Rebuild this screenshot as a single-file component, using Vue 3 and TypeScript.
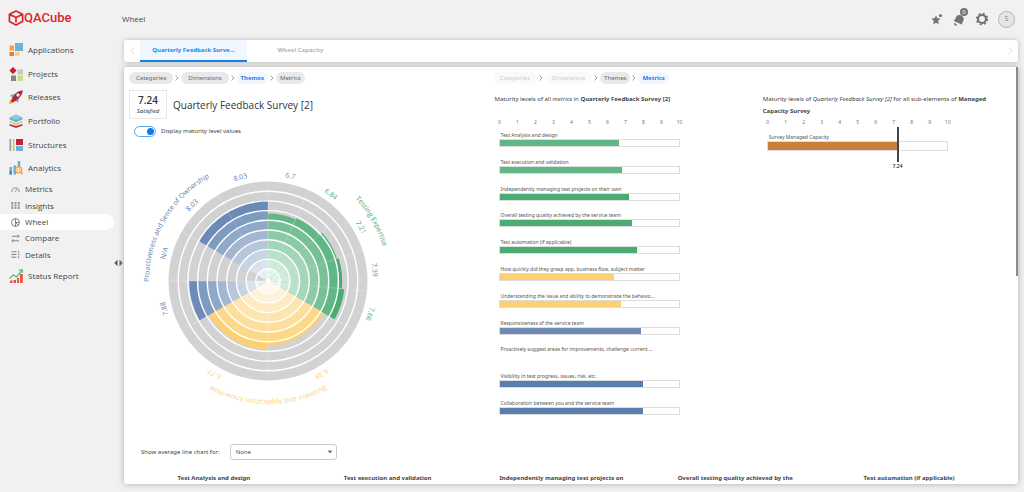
<script setup lang="ts">
import { computed, ref } from 'vue'

type Rgb = [number, number, number]
interface Sector { name: string; label: string; value: number | null }
interface Category { id: string; name: string; color: Rgb; full: number; radius: number; sectors: Sector[] }

const categories: Category[] = [
  {
    id: 'testing', name: 'Testing Expertise', color: [73, 172, 114], full: 8, radius: 120,
    sectors: [
      { name: 'Test Analysis and design', label: '6.7', value: 6.7 },
      { name: 'Test execution and validation', label: '6.84', value: 6.84 },
      { name: 'Independently managing test projects on their own', label: '7.21', value: 7.21 },
      { name: 'Overall testing quality achieved by the service team', label: '7.39', value: 7.39 },
      { name: 'Test automation (if applicable)', label: '7.66', value: 7.66 },
    ],
  },
  {
    id: 'business', name: 'Business and Application Know-How', color: [252, 209, 117], full: 7, radius: 119,
    sectors: [
      { name: 'How quickly did they grasp app, business flow, subject matter', label: '6.38', value: 6.38 },
      { name: 'Understanding the issue and ability to demonstrate the behavio...', label: '6.77', value: 6.77 },
    ],
  },
  {
    id: 'ownership', name: 'Proactiveness and Sense of Ownership', color: [90, 126, 174], full: 9, radius: 119,
    sectors: [
      { name: 'Responsiveness of the service team', label: '7.88', value: 7.88 },
      { name: 'Proactively suggest areas for improvements, challenge current ...', label: 'N/A', value: null },
      { name: 'Visibility in test progress, issues, risk, etc.', label: '8.03', value: 8.03 },
      { name: 'Collaboration between you and the service team', label: '8.03', value: 8.03 },
    ],
  },
]

const shade = (c: Category, level: number): string => {
  const a = Math.min(1, level / c.full)
  return `rgb(${c.color.map((v) => Math.round(255 - (255 - v) * a)).join(',')})`
}

const CORE = 2.5
const STEP = 9.7
const radiusOf = (value: number): number => CORE + STEP * value

const point = (r: number, deg: number): string => {
  const t = (deg * Math.PI) / 180
  return `${(r * Math.sin(t)).toFixed(2)} ${(-r * Math.cos(t)).toFixed(2)}`
}
const wedge = (r: number, from: number, to: number): string =>
  `M0 0L${point(r, from)}A${r} ${r} 0 0 1 ${point(r, to)}Z`
const arc = (r: number, from: number, to: number): string =>
  `M${point(r, from)}A${r} ${r} 0 0 1 ${point(r, to)}`

const slices = computed(() => {
  let angle = 0
  return categories.flatMap((c) => {
    const span = 120 / c.sectors.length
    return c.sectors.map((s) => {
      const from = angle
      angle += span
      const layers: { d: string; fill: string }[] = []
      if (s.value !== null) {
        for (let level = Math.ceil(s.value); level >= 1; level--) {
          layers.push({ d: wedge(radiusOf(Math.min(level, s.value)), from, from + span), fill: shade(c, level) })
        }
      }
      return { ...s, from, mid: from + span / 2, layers, ink: shade(c, c.full) }
    })
  })
})

const bars = categories.flatMap((c) =>
  c.sectors.map((s) => ({ ...s, fill: s.value === null ? '' : shade(c, Math.ceil(s.value)) })),
)
const ticks = Array.from({ length: 11 }, (_, i) => i)
const showValues = ref(true)
const average = ref('None')

const mainNav = ['Applications', 'Projects', 'Releases', 'Portfolio', 'Structures', 'Analytics']
const subNav = ['Metrics', 'Insights', 'Wheel', 'Compare', 'Details']
const crumbs = ['Categories', 'Dimensions', 'Themes', 'Metrics']
const columns = [
  'Test Analysis and design',
  'Test execution and validation',
  'Independently managing test projects on',
  'Overall testing quality achieved by the',
  'Test automation (if applicable)',
]
</script>

<template>
  <div class="app">
    <aside class="sidebar">
      <a href="#" class="logo" aria-label="QACube">
        <svg viewBox="0 0 16 16" width="16" height="16" fill="none" stroke="#e01f2d" stroke-width="1.7" stroke-linejoin="round">
          <path d="M8 1L14.600 4.200V11.600L8 15L1.400 11.600V4.200ZM4.200 5.600L8 7.600L14.200 4.400M8 7.600V12.500M1.600 4.400L4.600 6" />
        </svg>
        <span>QACube</span>
      </a>
      <nav>
        <div class="group">
          <a v-for="item in mainNav" :key="item" href="#" class="item">
            <svg v-if="item === 'Applications'" viewBox="0 0 14 14" width="14" height="14">
              <path fill="#f9a13c" d="M.5 2.500h4.500v5H.5z" /><path fill="#6db3d3" d="M6 0h8v8H6z" />
              <path fill="#f0782c" d="M.5 9h4.500v4H.5z" /><path fill="#fbd08c" d="M6 9h4.500v4H6z" />
            </svg>
            <svg v-else-if="item === 'Projects'" viewBox="0 0 14 14" width="14" height="14">
              <path fill="#c81e3c" d="M4 0l3.600 3.600L4 7.200L.4 3.600z" /><path fill="#c8c8c8" d="M8.500 2.500H14V7.500H8.500z" />
              <path fill="#858585" d="M2 8.500h5V14H2z" /><path fill="#c5df7c" d="M8.500 8.500H14V14H8.500z" />
            </svg>
            <svg v-else-if="item === 'Releases'" viewBox="0 0 14 14" width="14" height="14">
              <path fill="#74b5d4" d="M1 5l4-1 5 5-1 4-2-2-4-3zM2 9l3 3-3 0z" />
              <path fill="#f5a23c" d="M0 14l1-4 3-1 1 2-1 2z" />
              <path fill="#b92135" d="M3 9C5 4 8 1 13.800.2C13.500 5 10 9 5.500 11.400z" />
              <path fill="#6b2640" d="M3 9l-.8 2L4 12.200 5.500 11.400z" /><circle cx="9" cy="5" r="1.700" fill="#d9eef6" />
            </svg>
            <svg v-else-if="item === 'Portfolio'" viewBox="0 0 14 14" width="14" height="14">
              <path fill="#c9203d" d="M.5 10L7 12l6.500-2v1.500L7 14 .5 11.500z" />
              <path fill="#b8d66b" d="M.5 7L7 9.200 13.500 7v1.500L7 11.200 .5 8.500z" />
              <path fill="#69b1cf" d="M7 .8l6.500 2.600v2.200L7 8.200 .5 5.600V3.400z" /><path fill="#8ec9df" d="M7 .8l6.500 2.600L7 6 .5 3.400z" />
            </svg>
            <svg v-else-if="item === 'Structures'" viewBox="0 0 14 14" width="14" height="14">
              <path fill="#9c9c9c" d="M.5 1H2v12H.5z" /><path fill="#e5e5e5" d="M2 1h2v12H2z" /><path fill="#b7d56c" d="M4 1h1.500v12H4z" />
              <path fill="#c5203c" d="M7 1h7v6H7z" /><path fill="#6db4d3" d="M7 8h7v5H7z" />
            </svg>
            <svg v-else viewBox="0 0 14 14" width="14" height="14">
              <path fill="#67aecd" d="M.5 6H3v7.500H.5zM4.500 4.500H7v9H4.500zM8.700 0h2.500v6H8.700z" /><path fill="#4593b9" d="M.5 10H3v3.500H.5z" />
              <circle cx="9.600" cy="8.800" r="3" fill="#fff1dc" stroke="#f49b3a" stroke-width="1.300" />
              <path stroke="#f49b3a" stroke-width="1.500" d="M11.700 11l2 2.300" /><path stroke="#f49b3a" stroke-width=".8" d="M8.500 10V8.500M10.500 10V7.500" />
            </svg>
            {{ item }}
          </a>
        </div>
        <div class="group sub">
          <a v-for="item in subNav" :key="item" href="#" class="subitem" :class="{ active: item === 'Wheel' }">
            <svg viewBox="0 0 10 10" width="9" height="9" fill="none" stroke="#777" stroke-width="1">
              <path v-if="item === 'Metrics'" d="M1.200 8A4 3.700 0 1 1 8.800 8M4.800 7.500L6.500 5" />
              <path v-else-if="item === 'Insights'" stroke="#999" stroke-width="2.200" stroke-dasharray="2.200 .6" d="M1.400 1v8M5 1v8M8.600 1v8" />
              <path v-else-if="item === 'Wheel'" d="M5 .6A4.400 4.400 0 1 0 5 9.400A4.400 4.400 0 1 0 5 .6ZM5 .6V9.400M5 5h4.400M5 5l3 3" />
              <path v-else-if="item === 'Compare'" d="M1 2.500h8M7.300.8L9 2.500 7.300 4.200M9 7.500H1M2.700 5.800L1 7.500l1.700 1.700" />
              <path v-else d="M.5 2h5.500M.5 5h5.500M.5 8h5.500M8.500 1v2M8.500 4v2M8.500 7v2" />
            </svg>
            {{ item }}
          </a>
        </div>
        <a href="#" class="item">
          <svg viewBox="0 0 14 14" width="14" height="14">
            <path fill="#ef5142" d="M1 11.500h2.500V14H1zM4.500 11H7v3H4.500zM8 9h2v5H8zM11 5h2.800v9H11z" />
            <path fill="none" stroke="#57c785" stroke-width="1.400" d="M.5 9.500L4.500 6l3 2L13 1.500M10 1h3.500v3" />
          </svg>
          Status Report
        </a>
      </nav>
      <button class="resize" aria-label="Resize sidebar">
        <svg viewBox="0 0 9 8" width="9" height="8" fill="#555"><path d="M3.500 .8v6.400L.3 4zM5.500.8v6.400L8.700 4z" /></svg>
      </button>
    </aside>

    <main class="main">
      <header class="topbar">
        <span class="page">Wheel</span>
        <div class="actions">
          <button aria-label="Favourites">
            <svg viewBox="0 0 12 12" width="12" height="12" fill="#737373">
              <path d="M5 2.500l1.300 2.800 3.200.3-2.300 2.200.6 3.400L5 9.700 2.200 11.200l.6-3.400L.4 5.600l3.200-.3z" /><path d="M9.500.5l.7 1.300 1.400.3-1 1 .2 1.400-1.300-.7-1.300.7.200-1.400-1-1 1.400-.3z" />
            </svg>
          </button>
          <button class="bell" aria-label="Notifications">
            <svg viewBox="0 0 14 14" width="14" height="14" fill="#737373">
              <path d="M1.200 8.800C4.200 8 3 4.500 6 3.200c3.200-1.300 6.500 1.800 5.500 5-.8 2.600-1.800 2.300-1.300 4.600z" /><path d="M2.500 10.700l2.800 2.200a1.700 1.700 0 0 1-2.800-2.200z" />
            </svg>
            <span class="badge">0</span>
          </button>
          <button aria-label="Settings">
            <svg viewBox="-7 -7 14 14" width="14" height="14" fill="none" stroke="#737373">
              <circle r="4" stroke-width="2.200" /><circle r="5.400" stroke-width="1.600" stroke-dasharray="2.100 2.140" />
            </svg>
          </button>
          <button class="avatar" aria-label="Account">S</button>
        </div>
      </header>

      <div class="tabs">
        <button class="arrow" aria-label="Previous"><svg viewBox="0 0 5 8" width="5" height="8"><path d="M4.500.5L1 4l3.500 3.500" /></svg></button>
        <button class="tab on">Quarterly Feedback Surve...</button>
        <button class="tab">Wheel Capacity</button>
        <button class="arrow last" aria-label="Next"><svg viewBox="0 0 5 8" width="5" height="8"><path d="M.5.5L4 4 .5 7.500" /></svg></button>
      </div>

      <section class="panel">
        <div class="thumb"></div>
        <div class="grid">
          <div class="overview">
            <div class="crumbs">
              <template v-for="(c, i) in crumbs" :key="c">
                <svg v-if="i" viewBox="0 0 4 6" width="4" height="6"><path d="M.5.5L3 3 .5 5.500" /></svg>
                <button :class="{ current: c === 'Themes' }">{{ c }}</button>
              </template>
            </div>
            <div class="heading">
              <div class="score"><b>7.24</b><i>Satisfied</i></div>
              <h1>Quarterly Feedback Survey [2]</h1>
            </div>
            <label class="toggle">
              <input v-model="showValues" type="checkbox" />
              Display maturity level values
            </label>
            <svg class="wheel" viewBox="-139 -139 278 278" role="img" aria-label="Maturity wheel">
              <circle r="99.500" fill="#d2d2d2" />
              <g v-for="s in slices" :key="s.from">
                <path v-for="(l, i) in s.layers" :key="i" :d="l.d" :fill="l.fill" />
              </g>
              <g fill="none" stroke="#fff" stroke-width="1.400">
                <circle v-for="n in 9" :key="n" :r="radiusOf(n)" />
              </g>
              <path v-for="s in slices" :key="s.from" :d="`M0 0L${point(99.5, s.from)}`" stroke="#fff" stroke-width=".8" opacity=".3" />
              <circle r="2.500" fill="#fff" />
              <g v-if="showValues" class="values">
                <text v-for="s in slices" :key="s.from" y="-105" :transform="`rotate(${s.mid})`" :fill="s.ink">{{ s.label }}</text>
              </g>
              <g class="names">
                <template v-for="(c, i) in categories" :key="c.id">
                  <path :id="c.id" :d="arc(c.radius, i * 120, i * 120 + 120)" fill="none" />
                  <text :fill="shade(c, c.full)"><textPath :href="`#${c.id}`" startOffset="50%">{{ c.name }}</textPath></text>
                </template>
              </g>
            </svg>
            <div class="average">
              <label for="average">Show average line chart for:</label>
              <span class="select">
                <select id="average" v-model="average"><option>None</option></select>
                <svg viewBox="0 0 6 4" width="6" height="4"><path fill="#777" d="M.5.500h5L3 3.500z" /></svg>
              </span>
            </div>
          </div>

          <div class="metrics">
            <div class="crumbs">
              <template v-for="(c, i) in crumbs" :key="c">
                <svg v-if="i" viewBox="0 0 4 6" width="4" height="6"><path d="M.5.5L3 3 .5 5.500" /></svg>
                <button :class="{ current: c === 'Metrics' }" :disabled="i < 2">{{ c }}</button>
              </template>
            </div>
            <p class="caption">Maturity levels of all <i>metrics</i> in <b>Quarterly Feedback Survey [2]</b></p>
            <div class="axis"><span v-for="t in ticks" :key="t">{{ t }}</span></div>
            <div class="bars">
              <div v-for="b in bars" :key="b.name" class="bar">
                <span>{{ b.name }}</span>
                <div v-if="b.value !== null" class="track">
                  <div class="fill" :style="{ width: b.value * 10 + '%', background: b.fill }"></div>
                </div>
              </div>
            </div>
          </div>

          <div class="elements">
            <p class="caption">Maturity levels of <i>Quarterly Feedback Survey [2]</i> for all sub-elements of <b>Managed Capacity Survey</b></p>
            <div class="axis"><span v-for="t in ticks" :key="t">{{ t }}</span></div>
            <div class="bar wide">
              <span>Survey Managed Capacity</span>
              <div class="track">
                <div class="fill" :style="{ width: '72.4%', background: '#cc7f3c' }"></div>
                <div class="marker" :style="{ left: '72%' }"><span>7.24</span></div>
              </div>
            </div>
          </div>
        </div>
        <div class="columns"><h2 v-for="c in columns" :key="c">{{ c }}</h2></div>
      </section>
    </main>
  </div>
</template>

<style>
body { margin: 0; background: #f1f1f1; }
</style>

<style scoped>
* { box-sizing: border-box; }
.app { display: flex; height: 100vh; overflow: hidden; font: 6px/12px "Noto Sans", "Open Sans", sans-serif; color: #444; background: #f1f1f1; }
button { margin: 0; padding: 0; border: 0; background: none; font: inherit; color: inherit; cursor: pointer; }
a { color: inherit; text-decoration: none; }
svg { display: block; flex: none; }
.sidebar { position: relative; flex: none; width: 122px; padding-top: 8px; }
.logo { display: flex; align-items: center; height: 19px; padding-left: 8px; color: #e01f2d; font: 500 13px/18px Roboto, sans-serif; }
nav { padding-top: 11px; }
.group { display: flex; flex-direction: column; height: 142px; }
.group .item { flex: 1; }
.item, .subitem, .page { font: 500 8px/12px "Open Sans", sans-serif; color: #444; }
.item { display: flex; align-items: center; gap: 5px; height: 24px; padding-left: 9px; }
.sub { height: 82px; margin: 1px 0; }
.subitem { flex: 1; display: flex; align-items: center; gap: 5px; margin-right: 8px; padding-left: 11px; border-radius: 0 8px 8px 0; }
.active { background: #fff; }
.resize { position: absolute; right: -1px; top: 259px; }
.main { flex: 1; min-width: 0; display: flex; flex-direction: column; padding: 0 6px 8px 0; }
.topbar { display: flex; align-items: center; justify-content: space-between; height: 38px; flex: none; margin-bottom: 2px; padding-right: 3px; }
.actions { display: flex; align-items: center; gap: 9px; }
.bell { position: relative; }
.badge { position: absolute; right: -2px; top: -4px; width: 8px; height: 8px; border-radius: 4px; background: #737373; color: #fff; font-size: 6px; line-height: 8px; }
.avatar { width: 17px; height: 17px; border: 1px solid #b5b5b5; border-radius: 50%; background: #e5e5e5; color: #888; font-size: 7px; }
.tabs { display: flex; flex: none; height: 22px; margin: 0 0 5px 2px; border-radius: 3px; background: #fff; box-shadow: 0 0 5px #bbb; }
.arrow { width: 16px; display: grid; place-items: center; }
.arrow path { fill: none; stroke: #ddd; stroke-width: 1; }
.last { margin-left: auto; }
.tab { width: 107px; color: #b5b5b5; border-bottom: 2px solid transparent; font-weight: 700; }
.tab.on { color: #1b86ea; background: #f1f7fe; border-color: #0f7fe8; }
.panel { position: relative; flex: 1; min-height: 0; overflow: hidden; margin-left: 2px; border-radius: 3px 0 3px 3px; background: #fff; box-shadow: 0 0 6px #aaa; }
.thumb { position: absolute; right: 0; top: 0; width: 2px; height: 50%; background: #8b8b8b; }
.grid { display: grid; grid-template-columns: 41% 30% 29%; padding-top: 5px; }
.overview { padding-left: 5px; }
.crumbs { display: flex; align-items: center; gap: 2px; height: 12px; }
.crumbs path { fill: none; stroke: #888; stroke-width: .8; }
.crumbs button { height: 12px; padding: 0 7px; border-radius: 6px; background: #e9e9e9; color: #666; line-height: 12px; }
.crumbs button:nth-of-type(n + 3) { padding: 0 4px; }
.crumbs button:disabled { background: #fafafa; color: #ccc; }
.crumbs .current { background: #f0f7ff; color: #1582ea; font-weight: 700; }
.heading { display: flex; align-items: center; gap: 6px; margin-top: 6px; }
.score { width: 38px; height: 29px; padding-top: 3px; border: 1px solid #e8e8e8; text-align: center; color: #333; }
.score b { display: block; font: 600 10px/13px "Open Sans", sans-serif; }
.score i { display: block; font-size: 6px; line-height: 8px; }
h1 { margin: 0; font: 500 10px/14px "Open Sans", sans-serif; color: #333; }
.toggle { display: flex; align-items: center; gap: 5px; height: 12px; margin: 6px 0 0 5px; }
.toggle input { appearance: none; width: 22px; height: 11px; margin: 0; padding: 1px; border: 1px solid #5ba7ef; border-radius: 6px; background: #fff; display: flex; }
.toggle input::before { content: ""; width: 7px; height: 7px; border-radius: 50%; background: #b5b5b5; }
.toggle input:checked { justify-content: flex-end; }
.toggle input:checked::before { background: #0a7de8; }
.wheel { width: 278px; max-width: 100%; margin-top: 5px; }
.values, .names { font: 7px "Open Sans", sans-serif; text-anchor: middle; }
.values { font-weight: 500; }
.average { display: flex; align-items: center; gap: 10px; margin: 24px 0 0 12px; }
.select { position: relative; }
.select select { appearance: none; display: block; width: 107px; height: 16px; padding: 0 5px; border: 1px solid #ccc; border-radius: 3px; background: #fff; font: inherit; color: #555; }
.select svg { position: absolute; right: 4px; top: 6px; pointer-events: none; }
.metrics .crumbs { padding-left: 2px; }
.caption { margin: 9px 0 0; padding-left: 4px; line-height: 12px; }
.caption b { font-weight: 700; }
.axis { display: flex; width: 198px; margin-top: 12px; font-size: 5px; line-height: 10px; color: #777; }
.axis span { flex: 1; text-align: center; }
.bars { display: flex; flex-direction: column; justify-content: space-between; height: 284px; margin-top: 4px; }
.bar { width: 181px; height: 16px; margin-left: 8px; font-size: 5px; line-height: 8px; color: #555; }
.bar > span { display: block; padding-left: 2px; white-space: nowrap; }
.track { position: relative; height: 8px; border: 1px solid #ddd; background: #fff; }
.fill { height: 100%; }
.elements { padding-top: 12px; }
.elements .caption { padding-right: 14px; }
.elements .axis { margin-top: 0; }
.wide { margin-top: 6px; }
.wide .track { height: 10px; }
.marker { position: absolute; top: -15px; width: 2px; height: 35px; background: #444; display: flex; justify-content: center; }
.marker span { margin-top: 35px; font-weight: 600; color: #333; }
.columns { display: grid; grid-template-columns: repeat(5, 1fr); padding: 0 22px 0 3px; margin-top: 12px; }
h2 { margin: 0; padding: 0 18px; font-size: 6px; font-weight: 700; line-height: 12px; text-align: center; }
</style>
